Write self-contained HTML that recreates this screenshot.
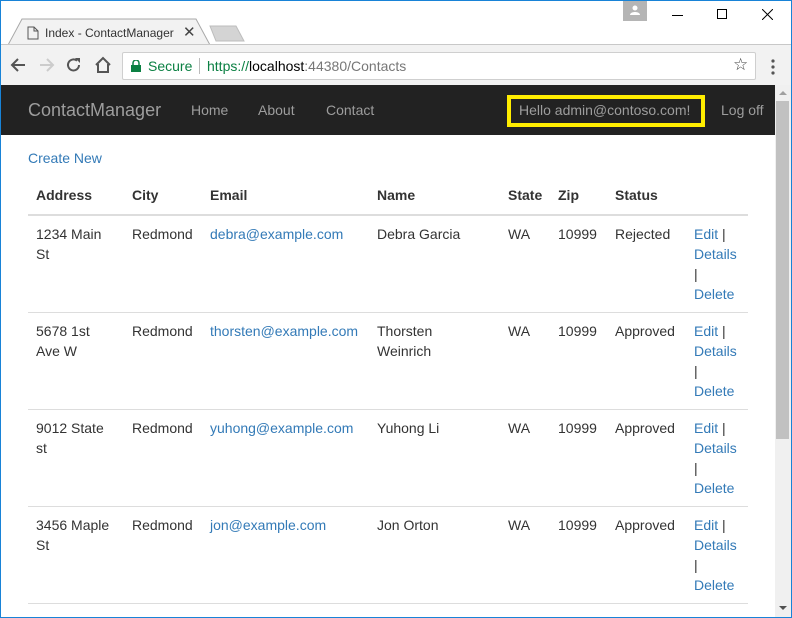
<!DOCTYPE html>
<html><head><style>
*{margin:0;padding:0;box-sizing:border-box}
body{width:792px;height:618px;overflow:hidden;background:#fff;font-family:"Liberation Sans",Arial,sans-serif;position:relative;}
.frame{position:absolute;left:0;top:0;width:792px;height:618px;border:1px solid #1883d7;z-index:10;pointer-events:none}
.titlebar{position:absolute;left:0;top:0;width:792px;height:44px;background:#fff}
.tab{position:absolute;left:8px;top:18px;width:204px;height:27px;}
.toolbar{position:absolute;left:0;top:44px;width:792px;height:41px;background:#f2f2f2;border-top:1px solid #c8c8c8}
.addr{position:absolute;left:122px;top:7px;width:634px;height:28px;background:#fff;border:1px solid #cfcfcf;border-radius:2px;font-size:14px;line-height:26px}
.nav{position:absolute;left:1px;top:85px;width:774px;height:50px;background:#222;color:#9d9d9d;font-size:14px}
.nav span{position:absolute;top:17px}
.scroll{position:absolute;left:775px;top:85px;width:16px;height:532px;background:#f0f0f0}
.thumb{position:absolute;left:1px;top:16px;width:13px;height:338px;background:#c1c1c1}
.content{position:absolute;left:0;top:135px;width:775px;height:483px;overflow:hidden;font-size:14px;color:#333;line-height:20px}
a{color:#337ab7;text-decoration:none}
table{position:absolute;left:28px;top:42px;border-collapse:collapse;width:720px;table-layout:fixed}
th{text-align:left;font-weight:bold;padding:8px 8px 9px 8px;border-bottom:2px solid #ddd;vertical-align:bottom}
td{padding:8px;vertical-align:top;border-bottom:1px solid #ddd;height:97px}
</style></head><body>
<div class="titlebar">
<svg class="tab" width="204" height="27" viewBox="0 0 204 27"><path d="M0 27 L14 1 H188 L202 27" fill="#f2f2f2" stroke="#a8a8a8"/></svg>
<svg style="position:absolute;left:27px;top:26px" width="12" height="14"><path d="M1 1h6l4 4v8H1z M7 1v4h4" fill="none" stroke="#555"/></svg>
<div style="position:absolute;left:45px;top:26px;font-size:12px;color:#333">Index - ContactManager</div>
<div style="position:absolute;left:183px;top:23px;font-size:15px;color:#444">✕</div>
<svg style="position:absolute;left:208px;top:25px" width="40" height="20"><path d="M2 1h26l8 15H8z" fill="#d4d4d4" stroke="#bdbdbd"/></svg>
<div style="position:absolute;left:623px;top:1px;width:24px;height:20px;background:#b5b5b5"></div>
<svg style="position:absolute;left:629px;top:4px" width="12" height="12"><circle cx="6" cy="4" r="2.5" fill="#fff"/><path d="M1 11c0-4 10-4 10 0z" fill="#fff"/></svg>
<div style="position:absolute;left:672px;top:15px;width:11px;height:1px;background:#000"></div>
<div style="position:absolute;left:717px;top:9px;width:10px;height:10px;border:1px solid #000"></div>
<svg style="position:absolute;left:762px;top:9px" width="11" height="11"><path d="M0 0L11 11M11 0L0 11" stroke="#000"/></svg>
</div>
<div class="toolbar">
<svg style="position:absolute;left:10px;top:12px" width="16" height="16"><path d="M15 8H2M8 2L2 8l6 6" fill="none" stroke="#555" stroke-width="2"/></svg>
<svg style="position:absolute;left:39px;top:12px" width="16" height="16"><path d="M1 8h13M8 2l6 6-6 6" fill="none" stroke="#ccc" stroke-width="2"/></svg>
<svg style="position:absolute;left:66px;top:12px" width="16" height="16"><path d="M13 8a5.5 5.5 0 1 1-2-4.3" fill="none" stroke="#555" stroke-width="2"/><path d="M9 1h5v5z" fill="#555"/></svg>
<svg style="position:absolute;left:94px;top:11px" width="18" height="18"><path d="M2 9L9 2l7 7M4 8v8h10V8" fill="none" stroke="#555" stroke-width="2"/></svg>
<div class="addr">
<svg style="position:absolute;left:8px;top:7px" width="10" height="12"><rect x="0" y="5" width="10" height="7" fill="#0b8043"/><path d="M2 5V3a3 3 0 0 1 6 0v2" fill="none" stroke="#0b8043" stroke-width="1.5"/></svg>
<span style="position:absolute;left:25px;color:#0b8043">Secure</span>
<span style="position:absolute;left:76px;top:5px;width:1px;height:16px;background:#bbb"></span>
<span style="position:absolute;left:84px;white-space:nowrap"><span style="color:#0b8043">https://</span><span style="color:#000">localhost</span><span style="color:#777">:44380/Contacts</span></span>
<span style="position:absolute;left:610px;top:-1px;font-size:17px;color:#444">☆</span>
</div>
<svg style="position:absolute;left:770px;top:14px" width="6" height="16"><circle cx="3" cy="2" r="1.6" fill="#555"/><circle cx="3" cy="8" r="1.6" fill="#555"/><circle cx="3" cy="14" r="1.6" fill="#555"/></svg>
</div>
<div class="nav">
<span style="left:27px;top:15px;font-size:18px">ContactManager</span>
<span style="left:190px">Home</span>
<span style="left:257px">About</span>
<span style="left:325px">Contact</span>
<div style="position:absolute;left:506px;top:10px;width:198px;height:32px;border:4px solid #ffed00"></div>
<span style="left:518px">Hello admin@contoso.com!</span>
<span style="left:720px">Log off</span>
</div>
<div class="scroll"><div style="position:absolute;left:4px;top:6px;border:4px solid transparent;border-bottom-color:#a0a0a0;border-top:0"></div><div class="thumb"></div><div style="position:absolute;left:4px;top:521px;border:4px solid transparent;border-top-color:#505050;border-bottom:0"></div></div>
<div class="content">
<a style="position:absolute;left:28px;top:13px">Create New</a>
<table>
<colgroup><col style="width:96px"><col style="width:78px"><col style="width:167px"><col style="width:131px"><col style="width:50px"><col style="width:57px"><col style="width:79px"><col style="width:62px"></colgroup>
<tr><th>Address</th><th>City</th><th>Email</th><th>Name</th><th>State</th><th>Zip</th><th>Status</th><th></th></tr>
<tr><td>1234 Main St</td><td>Redmond</td><td><a>debra@example.com</a></td><td>Debra Garcia</td><td>WA</td><td>10999</td><td>Rejected</td><td><a>Edit</a> | <a>Details</a> | <a>Delete</a></td></tr>
<tr><td>5678 1st Ave W</td><td>Redmond</td><td><a>thorsten@example.com</a></td><td>Thorsten<br>Weinrich</td><td>WA</td><td>10999</td><td>Approved</td><td><a>Edit</a> | <a>Details</a> | <a>Delete</a></td></tr>
<tr><td>9012 State st</td><td>Redmond</td><td><a>yuhong@example.com</a></td><td>Yuhong Li</td><td>WA</td><td>10999</td><td>Approved</td><td><a>Edit</a> | <a>Details</a> | <a>Delete</a></td></tr>
<tr><td>3456 Maple St</td><td>Redmond</td><td><a>jon@example.com</a></td><td>Jon Orton</td><td>WA</td><td>10999</td><td>Approved</td><td><a>Edit</a> | <a>Details</a> | <a>Delete</a></td></tr>
</table>
</div>
<div class="frame"></div>
</body></html>
